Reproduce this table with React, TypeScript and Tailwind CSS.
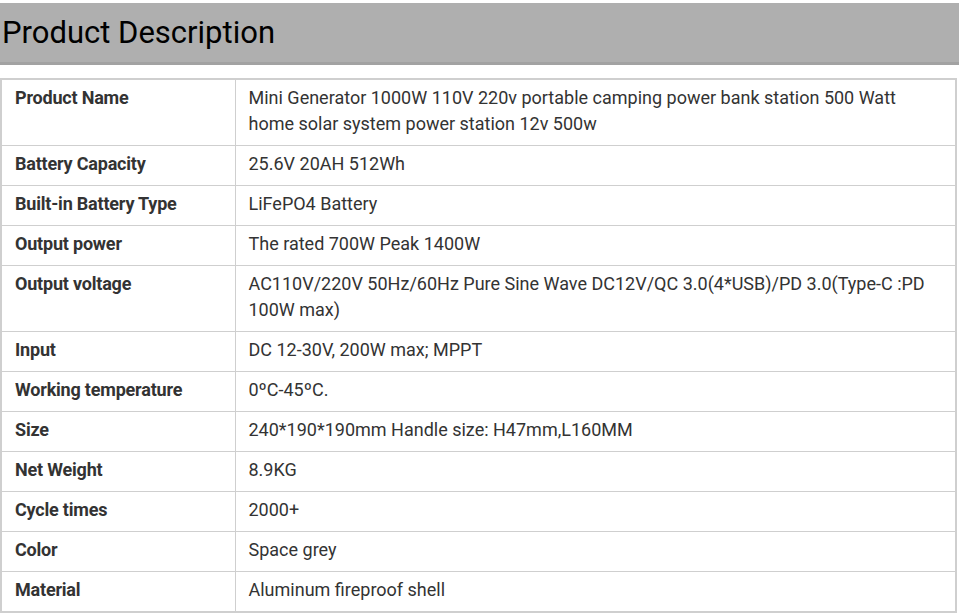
import React from 'react';

const rows: [string, string][] = [
  ['Product Name', 'Mini Generator 1000W 110V 220v portable camping power bank station 500 Watt home solar system power station 12v 500w'],
  ['Battery Capacity', '25.6V 20AH 512Wh'],
  ['Built-in Battery Type', 'LiFePO4 Battery'],
  ['Output power', 'The rated 700W Peak 1400W'],
  ['Output voltage', 'AC110V/220V 50Hz/60Hz Pure Sine Wave DC12V/QC 3.0(4*USB)/PD 3.0(Type-C :PD 100W max)'],
  ['Input', 'DC 12-30V, 200W max; MPPT'],
  ['Working temperature', '0ºC-45ºC.'],
  ['Size', '240*190*190mm Handle size: H47mm,L160MM'],
  ['Net Weight', '8.9KG'],
  ['Cycle times', '2000+'],
  ['Color', 'Space grey'],
  ['Material', 'Aluminum fireproof shell'],
];

export default function App() {
  return (
    <div className="min-h-screen bg-white pt-[3px] font-['Roboto',sans-serif] text-[#333]">
      {/* Header */}
      <div className="h-[62px] bg-[#afafaf] border-b-[3px] border-[#a2a2a2] flex items-center">
        <h2 className="pl-[2px] text-[31px] leading-none text-black">Product Description</h2>
      </div>

      {/* Spec table */}
      <table className="mt-[13px] w-[957px] border-collapse border-2 border-[#cfcfcf] text-[18px] leading-[26px]">
        <tbody>
          {rows.map(([label, value]) => (
            <tr key={label}>
              <td className="w-[234px] border border-[#cfcfcf] pl-[13px] pr-2 pt-[5px] pb-[8px] align-top font-bold tracking-[-0.2px]">
                {label}
              </td>
              <td className="border border-[#cfcfcf] pl-[13px] pr-3 pt-[5px] pb-[8px] align-top">
                {value}
              </td>
            </tr>
          ))}
        </tbody>
      </table>
    </div>
  );
}
